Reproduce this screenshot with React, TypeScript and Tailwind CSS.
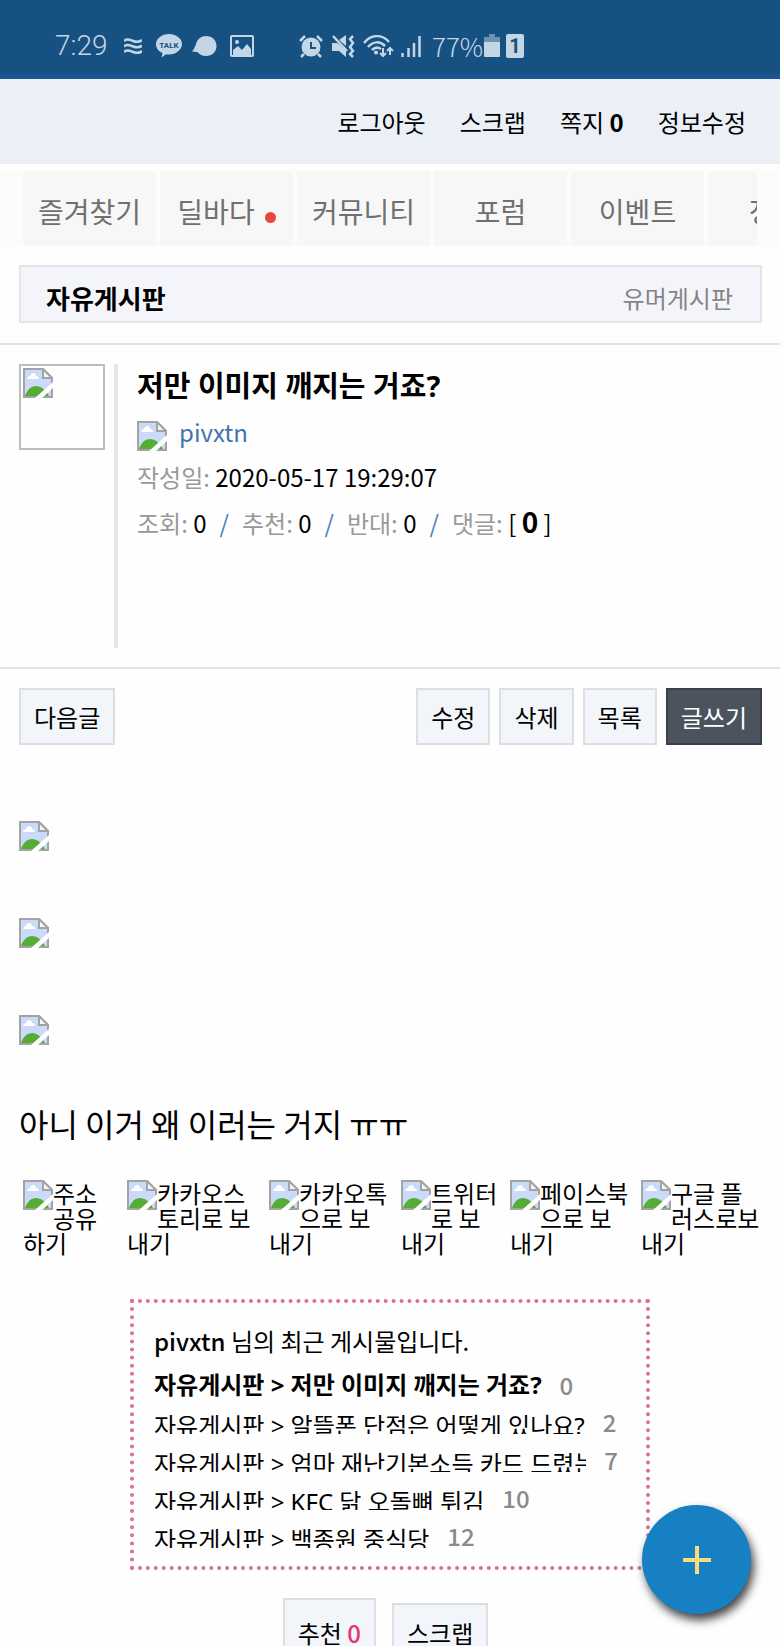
import { ReactNode } from "react";
import clsx from "clsx";

const menus = [
  { name: "즐겨찾기" },
  { name: "딜바다", isNew: true },
  { name: "커뮤니티" },
  { name: "포럼" },
  { name: "이벤트" },
  { name: "정보" },
];

const shares = [
  ["주소", "공유", "하기"],
  ["카카오스", "토리로 보", "내기"],
  ["카카오톡", "으로 보", "내기"],
  ["트위터", "로 보", "내기"],
  ["페이스북", "으로 보", "내기"],
  ["구글 플", "러스로보", "내기"],
];

const recents = [
  { title: "알뜰폰 단점은 어떻게 있나요?", count: 2 },
  { title: "엄마 재난기본소득 카드 드렸는데", count: 7 },
  { title: "KFC 닭 오돌뼈 튀김", count: 10 },
  { title: "백종원 중식당", count: 12 },
];

function BrokenImage({ className }: { className?: string }) {
  return (
    <svg viewBox="0 0 30 30" className={clsx("size-[30px] shrink-0", className)} aria-hidden="true">
      <path d="M1 1h19l9 9v19H1z" fill="#cbdaf8" />
      <path d="M4 11c0-2 2-3 3-3 1-4 6-4 6 0 2 0 3 1 3 3z" fill="#fff" />
      <path d="M2 28c2-6 6-10 11-10s10 4 13 10z" fill="#56ad35" />
      <path d="M1 1h19l9 9v19H1z" fill="none" stroke="#a3a3a3" strokeWidth="2" />
      <path d="M20 1v9h9z" fill="#f6f6f6" stroke="#a3a3a3" strokeWidth="2" />
      <path d="M12 30 30 14v6L19 30z" fill="#fff" />
    </svg>
  );
}

function StatusBar() {
  return (
    <div className="relative flex h-[79px] items-center border-b-[5px] border-[#1a5496] bg-[#175182] pt-[18px] pl-[55px] text-[#c3d6e6]">
      <span className="w-[69px] font-['Roboto'] text-[28px] font-light leading-6">7:29</span>
      <svg viewBox="0 0 18 16" className="h-4 w-[18px]" fill="none" stroke="currentColor" strokeWidth="2.500">
        <path d="M0 3c3-3 6-1 9 0s6 2 9-1M0 8.500c3-3 6-1 9 0s6 2 9-1M0 14c3-3 6-1 9 0s6 2 9-1" />
      </svg>
      <svg viewBox="0 0 26 24" className="ml-[14px] h-6 w-[26px]" fill="currentColor">
        <path d="M13 0c7 0 13 4.500 13 10s-6 10.500-13 10.500c-1 0-2 0-3-.3L5.500 23.500 6.500 19C2.500 17.300 0 14 0 10.200 0 4.500 6 0 13 0z" />
        <text x="13" y="13.500" fill="#175182" fontSize="8" fontWeight="700" fontFamily="Roboto" textAnchor="middle">TALK</text>
      </svg>
      <svg viewBox="0 0 25 22" className="ml-[10px] h-[22px] w-[25px]" fill="currentColor">
        <path d="M14 1c6 0 10.500 4 10.500 10S20 21 14 21c-4 0-7-2-8.500-4L0 16.500C2 14 3 12 4 9c1.500-5 5-8 10-8z" />
      </svg>
      <svg viewBox="0 0 24 22" className="ml-[13px] h-[22px] w-6" fill="none" stroke="currentColor" strokeWidth="2">
        <rect x="1" y="1" width="22" height="20" rx="1" />
        <circle cx="7" cy="7" r="2" fill="currentColor" stroke="none" />
        <path d="m3 15 5-4 4 4 5-6 4 5v6H3z" fill="currentColor" stroke="none" />
      </svg>
      <svg viewBox="0 0 24 23" className="ml-[45px] h-[23px] w-6" fill="none" stroke="currentColor" strokeWidth="2">
        <circle cx="12" cy="12" r="9.500" fill="currentColor" stroke="none" />
        <path d="M1 6l5-5M23 6l-5-5M5 19l-3 3M19 19l3 3" strokeWidth="2.500" />
        <path d="M12 7v6h5" stroke="#175182" />
      </svg>
      <svg viewBox="0 0 24 23" className="ml-[8px] h-[23px] w-6" fill="none" stroke="currentColor" strokeWidth="2">
        <path d="M1 8h5l3 2 6 6v6l-7-6H1zM8 5l7-5v11z" fill="currentColor" stroke="none" />
        <path d="M2 1l14 15" strokeWidth="2.500" />
        <path d="M22 1l-3 3 3 4-3 4 3 4-3 3 3 3" strokeWidth="2.500" />
      </svg>
      <svg viewBox="0 0 31 23" className="ml-[8px] h-[23px] w-[31px]" fill="none" stroke="currentColor" strokeWidth="2.500">
        <path d="M1 8C8-1 19-1 26 7M5 12c5-6 12-6 17-1M9 15c3-3 6-3 9-1" />
        <circle cx="13" cy="17.500" r="2" fill="currentColor" stroke="none" />
        <path d="M20 13v8m-3-3 3 3 3-3M27 20v-7m-3 3 3-3 3 3" strokeWidth="2" />
      </svg>
      <svg viewBox="0 0 20 23" className="ml-[7px] h-[23px] w-5" fill="none" stroke="currentColor" strokeWidth="2.500">
        <path d="M1.500 22v-4M7.500 22v-9M13 22V8M18.500 22V1" />
      </svg>
      <span className="ml-[11px] w-[52px] font-['Noto_Sans_CJK_KR',sans-serif] text-[26px] font-light leading-6">77%</span>
      <svg viewBox="0 0 16 24" className="h-6 w-4" fill="currentColor">
        <path d="M5 0h6v3h5v5H0V3h5z" opacity=".5" />
        <path d="M0 8h16v14a1 1 0 0 1-1 1H1a1 1 0 0 1-1-1z" />
      </svg>
      <span className="ml-[6px] flex h-6 w-[18px] items-center justify-center rounded-xs bg-[#c3d6e6] font-['Roboto'] text-xl font-bold text-[#175182]">
        1
      </span>
    </div>
  );
}

function Button({ children, dark, className }: { children: ReactNode; dark?: boolean; className?: string }) {
  return (
    <button
      type="button"
      className={clsx(
        "border-2 px-[13px] text-2xl leading-8",
        dark ? "border-[#3a3f48] bg-[#4b535f] text-white" : "border-[#dcdee0] bg-[#f2f5fa] text-black",
        className ?? "h-[57px]"
      )}
    >
      {children}
    </button>
  );
}

function Label({ children }: { children: ReactNode }) {
  return <span className="text-[#999]">{children}</span>;
}

function Slash() {
  return <span className="mx-[13px] text-[#4a7ebb]">/</span>;
}

export default function App() {
  return (
    <div className="min-h-screen overflow-x-hidden bg-[#fefefe] font-['Noto_Sans_CJK_KR',sans-serif] text-2xl text-black">
      <StatusBar />

      <header className="flex h-[85px] items-center justify-end gap-[34px] bg-[#ebeff6] pr-[34px] leading-9">
        <a href="#logout">로그아웃</a>
        <a href="#scrap">스크랩</a>
        <a href="#memo">쪽지 <b>0</b></a>
        <a href="#profile">정보수정</a>
      </header>

      <nav className="mt-[7px] flex bg-[#fcfcfc] px-[23px]">
        <ul className="flex h-[75px] flex-1 overflow-hidden">
          {menus.map((menu) => (
            <li key={menu.name} className="w-[137px] shrink-0 border-r-4 border-[#fcfcfc] bg-[#f7f7f7]">
              <a href={"#" + menu.name} className="flex h-full items-center justify-center gap-[10px] pt-[6px] text-[28px] text-[#707070]">
                {menu.name}
                {menu.isNew && <span className="mt-[12px] size-[11px] rounded-full bg-[#e8483a]" />}
              </a>
            </li>
          ))}
        </ul>
      </nav>

      <div className="mr-[18px] ml-[19px] mt-[19px] flex h-[58px] items-center justify-between border-2 border-[#e4e5e9] bg-[#f4f5fa] pt-[8px] pr-[27px] pl-[25px]">
        <h1 className="text-[26px] font-bold">자유게시판</h1>
        <a href="#humor" className="text-[#858585]">유머게시판</a>
      </div>

      <article>
        <header className="mt-[20px] flex border-y-2 border-[#e3e3e3] px-[19px] py-[19px]">
          <div className="size-[86px] border-2 border-[#bdbdbd] p-[2px]">
            <BrokenImage />
          </div>
          <div className="ml-[9px] min-h-[284px] border-l-4 border-[#e6e6e6] pl-[19px]">
            <h2 className="font-['Noto_Sans','Noto_Sans_CJK_KR',sans-serif] text-[29px] font-bold leading-[44px]">저만 이미지 깨지는 거죠?</h2>
            <div className="mt-[2px] flex h-11 items-center gap-3">
              <BrokenImage className="mt-[8px]" />
              <a href="#pivxtn" className="text-[#4472b0]">pivxtn</a>
            </div>
            <p className="leading-[45px]"><Label>작성일:</Label> 2020-05-17 19:29:07</p>
            <p className="leading-[45px]">
              <Label>조회:</Label> 0<Slash />
              <Label>추천:</Label> 0<Slash />
              <Label>반대:</Label> 0<Slash />
              <Label>댓글:</Label> [ <b className="text-[28px]">0</b> ]
            </p>
          </div>
        </header>

        <div className="flex gap-[9px] pt-[19px] pr-[18px] pl-[19px]">
          <Button>다음글</Button>
          <div className="flex-1" />
          <Button>수정</Button>
          <Button>삭제</Button>
          <Button>목록</Button>
          <Button dark>글쓰기</Button>
        </div>

        <div className="px-[19px] pt-[76px]">
          <div className="flex flex-col gap-[67px]">
            <BrokenImage />
            <BrokenImage />
            <BrokenImage />
          </div>
          <p className="mt-[54px] text-[32px] leading-[48px]">아니 이거 왜 이러는 거지 ㅠㅠ</p>
        </div>

        <ul className="mt-[33px] grid grid-cols-[104fr_142fr_132fr_109fr_131fr_122fr] pr-[17px] pl-[23px]">
          {shares.map((lines) => (
            <li key={lines.join("")}>
              <a href="#share" className="block whitespace-nowrap leading-[25px]">
                <BrokenImage className="float-left" />
                {lines[0]}<br />
                {lines[1]}<br />
                {lines[2]}
              </a>
            </li>
          ))}
        </ul>
      </article>

      <section className="mx-auto mt-[44px] h-[271px] w-2/3 border-4 border-dotted border-[#db7093] pt-[16px] pr-[28px] pl-[20px]">
        <p className="leading-[44px]"><span className="font-medium">pivxtn</span> 님의 최근 게시물입니다.</p>
        <ul className="font-['Noto_Sans','Noto_Sans_CJK_KR',sans-serif]">
          <li className="flex leading-[44px]">
            <a href="#post" className="font-bold">자유게시판 &gt; 저만 이미지 깨지는 거죠?</a>
            <span className="ml-[18px] font-['Noto_Sans_CJK_KR',sans-serif] font-medium text-[#8a8a8a]">0</span>
          </li>
          {recents.map((post) => (
            <li key={post.title} className="flex h-[38px] overflow-hidden leading-[38px]">
              <a href="#post" className="h-[27px] max-w-[436px] overflow-hidden whitespace-nowrap">
                자유게시판 &gt; {post.title}
              </a>
              <span className="ml-[18px] font-['Noto_Sans_CJK_KR',sans-serif] font-medium leading-[30px] text-[#8a8a8a]">{post.count}</span>
            </li>
          ))}
        </ul>
      </section>

      <div className="mt-[28px] flex items-center justify-center gap-4 pr-[9px]">
        <Button className="h-[66px] pt-[4px]">추천 <span className="font-medium text-[#e8336d]">0</span></Button>
        <Button className="h-[57px] pt-[4px]">스크랩</Button>
      </div>

      <button
        type="button"
        aria-label="메뉴 열기"
        className="fixed right-[29px] bottom-[32px] flex size-[109px] items-center justify-center rounded-full bg-[#1780c2] shadow-[3px_6px_10px_#444]"
      >
        <svg viewBox="0 0 28 28" className="size-7" stroke="#f7dc80" strokeWidth="4">
          <path d="M14 0v28M0 14h28" />
        </svg>
      </button>
    </div>
  );
}
